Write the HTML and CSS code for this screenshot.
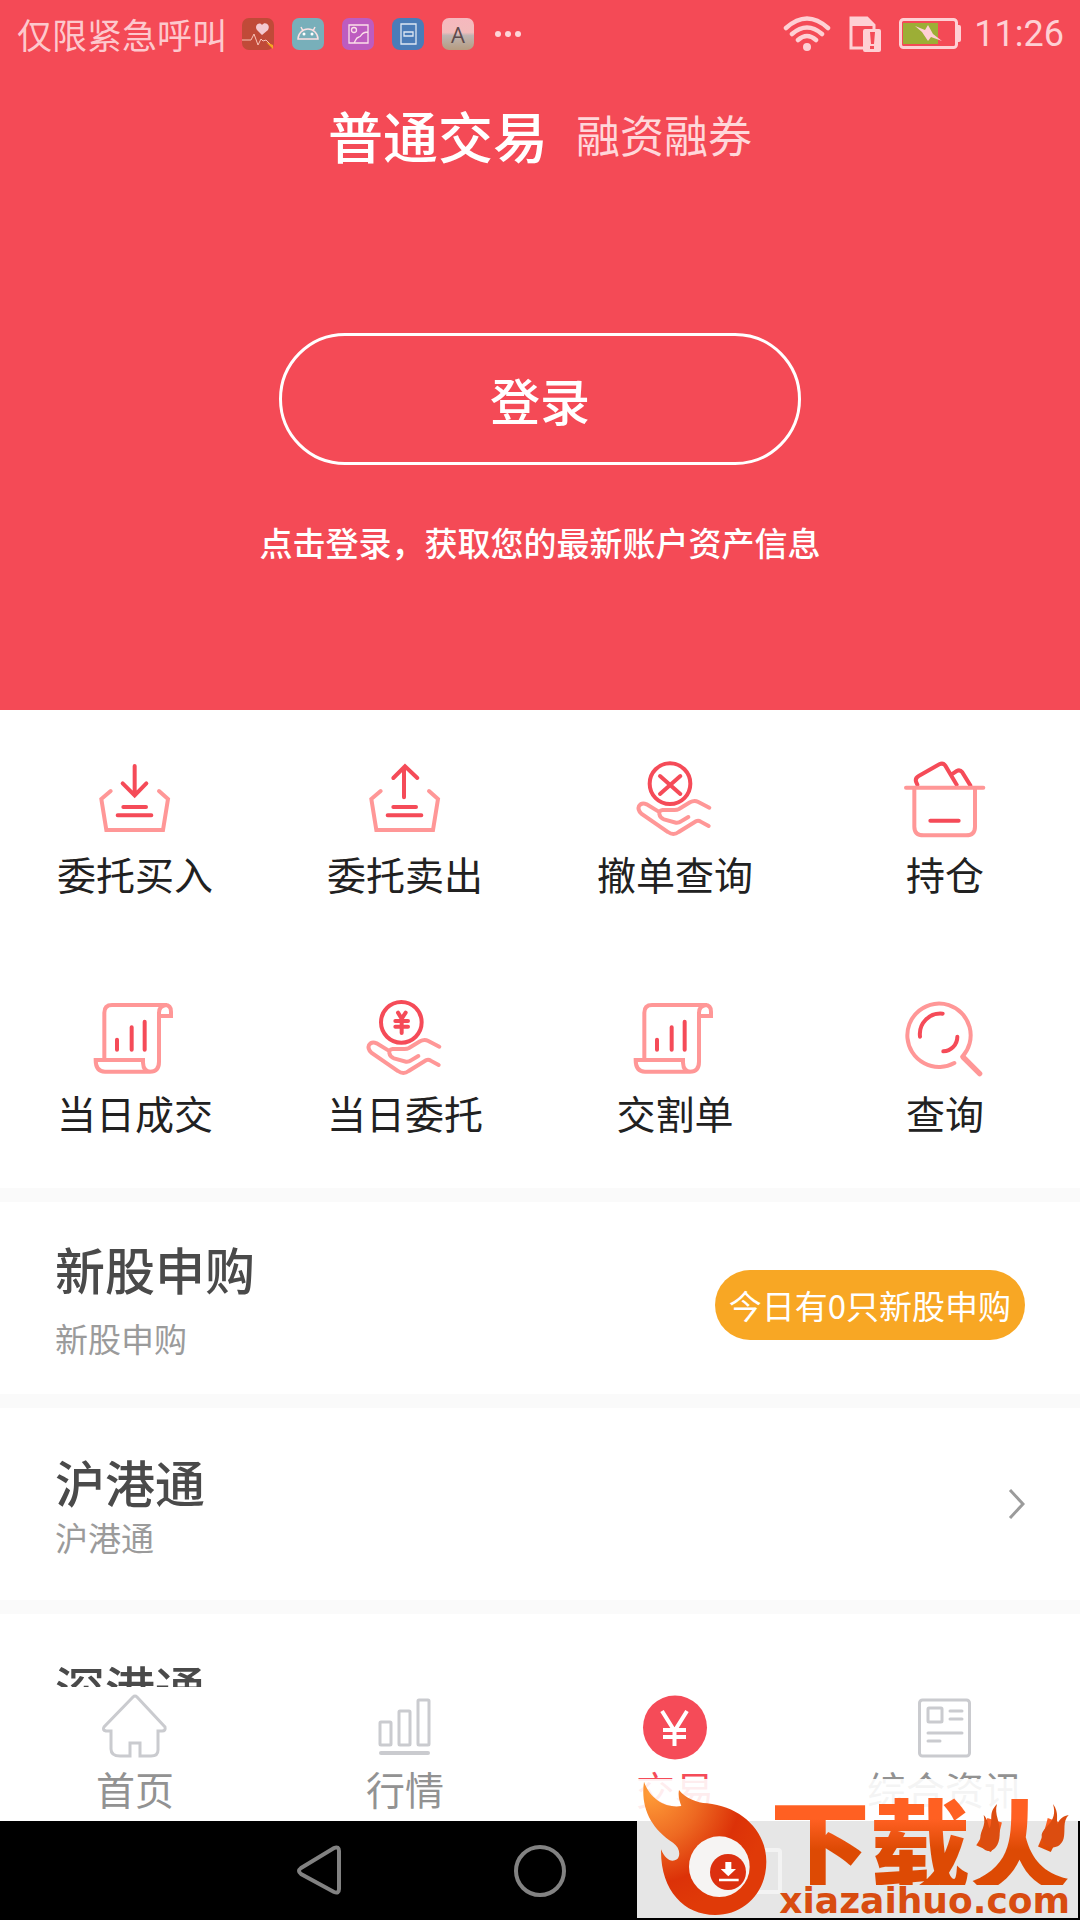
FILE: index.html
```html
<!DOCTYPE html>
<html lang="zh-CN">
<head>
<meta charset="utf-8">
<meta name="viewport" content="width=device-width, initial-scale=1">
<title>普通交易</title>
<link rel="stylesheet" href="styles.css">
</head>
<body>
<svg class="defs" aria-hidden="true">
  <symbol id="hand" viewBox="150 36 270 270">
    <path class="soft" d="M388 203L355 186Q343 180 330 187L297 207Q290 211 280 210L248 210Q236 212 238 222Q240 234 252 238L288 248Q296 249 303 244L325 231M236 215L200 193Q185 186 177 198Q172 209 184 221L264 276Q280 288 296 276L348 244Q355 240 362 245L386 258"/>
  </symbol>
  <symbol id="scroll" viewBox="90 33 270 270">
    <path class="soft" d="M133 238V98Q133 75 156 75H315Q333 75 333 95V108H299M318 75Q297 78 297 98V245Q297 275 270 275H135Q107 275 107 240H249V248Q250 275 272 275"/>
    <path class="strong" d="M171 179V209M215 142V209M254 125V209"/>
  </symbol>
</svg>
<div class="app">
  <main class="content">
    <header class="hero">
      <div class="status">
        <span class="carrier">仅限紧急呼叫</span>
        <div class="notices">
          <svg class="notice" viewBox="0 0 32 32"><rect width="32" height="32" rx="7" fill="#c04a38"/><path d="M20 17l-5-5c-3-4 2-9 5-5 3-4 9 0 6 5z" fill="#f3c9d0"/><path d="M0 22h9l3-6 4 11 3-6 2 2 3-1 4 4" fill="none" stroke="#f9c4b8"/><path d="M24 24l7 3v4z" fill="#f5a623"/></svg>
          <svg class="notice" viewBox="0 0 32 32"><rect width="32" height="32" rx="7" fill="#78afba"/><path d="M6 21a10 10 0 0 1 20 0zM9 9l2 4M23 9l-2 4" fill="none" stroke="#fbdfe2" stroke-width="1.5"/><circle cx="12" cy="16" r="1.5" fill="#fff"/><circle cx="20" cy="16" r="1.5" fill="#fff"/></svg>
          <svg class="notice" viewBox="0 0 32 32"><rect width="32" height="32" rx="7" fill="#bd5cc0"/><g fill="none" stroke="#fbdfe8" stroke-width="1.3"><path d="M7 7h19v18H7zM12 25c2-2 1-5 5-6 3-1 2-5 9-5"/><circle cx="12" cy="12" r="2.5"/></g></svg>
          <svg class="notice" viewBox="0 0 32 32"><rect width="32" height="32" rx="8" fill="#4a7cb8"/><path d="M9 6h15v20H9zM12 14h9v4h-9z" fill="none" stroke="#dde6f2" stroke-width="1.3"/></svg>
          <span class="notice letter">A</span>
          <svg class="dots" viewBox="0 0 28 32"><g fill="#fdd5d8"><circle cx="4" cy="16" r="3"/><circle cx="14" cy="16" r="3"/><circle cx="24" cy="16" r="3"/></g></svg>
        </div>
        <div class="system">
          <svg width="48" height="36" viewBox="0 0 48 36"><g fill="none" stroke="#fed0d4" stroke-width="4.5" stroke-linecap="round"><path d="M3 12Q24-7 45 12M9 18Q24 5 39 18M15 24Q24 16 33 24"/></g><circle cx="24" cy="31" r="4" fill="#fed0d4"/></svg>
          <svg width="32" height="36" viewBox="0 0 32 36"><path d="M2 32V2h16l7 7v5M2 2v30h13" fill="none" stroke="#fed0d4" stroke-width="3"/><path d="M1 1h17l8 9H1zM16 13h14q2 0 2 2v19q0 2-2 2H16q-2 0-2-2V15q0-2 2-2z" fill="#fed0d4"/><path d="M21 16h5l-1 12h-3zM21 30h4v3h-4z" fill="#f44a56"/></svg>
          <svg width="62" height="32" viewBox="0 0 62 32"><rect x="1.500" y="1.500" width="56" height="28" rx="3" fill="none" stroke="#fed0d4" stroke-width="3"/><path d="M58 7h2q2 0 2 2v13q0 2-2 2h-2z" fill="#fed0d4"/><path d="M4 5h35v21H4z" fill="#9cae36"/><path d="M16 8l10 4 3-5 5 9 9 7-11-4-3 4-6-9z" fill="#fed0d4"/></svg>
          <time class="clock">11:26</time>
        </div>
      </div>
      <nav class="modes">
        <a class="mode active" href="#normal">普通交易</a>
        <a class="mode" href="#margin">融资融券</a>
      </nav>
      <button class="login" type="button">登录</button>
      <p class="hint">点击登录，获取您的最新账户资产信息</p>
    </header>

    <nav class="grid">
      <a class="cell" href="#buy">
        <svg class="icon" viewBox="90 36 270 270"><path class="soft" d="M152 153L124 177L139 270H309L324 177L297 153"/><path class="strong" d="M224 78V165M188 130L224 166L259 130M190 201H258M173 226H274"/></svg>
        <span>委托买入</span>
      </a>
      <a class="cell" href="#sell">
        <svg class="icon" viewBox="90 36 270 270"><path class="soft" d="M152 153L124 177L139 270H309L324 177L297 153"/><path class="strong" d="M222 172V82M190 114L225 79L262 114M190 201H258M173 226H274"/></svg>
        <span>委托卖出</span>
      </a>
      <a class="cell" href="#cancel">
        <svg class="icon" viewBox="150 36 270 270"><use href="#hand" x="150" y="36" width="270" height="270"/><circle class="strong" cx="270" cy="131" r="61"/><path class="strong" d="M240 108L301 162M301 108L240 162"/></svg>
        <span>撤单查询</span>
      </a>
      <a class="cell" href="#holdings">
        <svg class="icon" viewBox="960 36 270 270"><path class="strong" d="M1012 134L1008 125Q1005 114 1016 108L1078 73Q1089 67 1096 77L1130 134M1115 103L1130 93Q1140 88 1147 97L1171 136M1051 242H1136"/><path class="soft" d="M978 143H1210M1003 143V260Q1003 286 1031 286H1158Q1185 286 1185 260V143"/></svg>
        <span>持仓</span>
      </a>
      <a class="cell" href="#deals">
        <svg class="icon" viewBox="0 0 270 270"><use href="#scroll" width="270" height="270"/></svg>
        <span>当日成交</span>
      </a>
      <a class="cell" href="#orders">
        <svg class="icon" viewBox="150 36 270 270"><use href="#hand" x="150" y="36" width="270" height="270"/><circle class="strong" cx="274" cy="130" r="61"/><path class="strong" d="M264 101L275 119L287 101M275 119V162M256 126H294M256 143H294"/></svg>
        <span>当日委托</span>
      </a>
      <a class="cell" href="#settlement">
        <svg class="icon" viewBox="0 0 270 270"><use href="#scroll" width="270" height="270"/></svg>
        <span>交割单</span>
      </a>
      <a class="cell" href="#query">
        <svg class="icon" viewBox="960 33 270 270"><path class="soft" d="M1123 249A95 95 0 1 1 1148 229"/><path class="soft thick" d="M1149 231L1199 281"/><path class="strong" d="M1020 170A62 62 0 0 1 1088 101M1132 170A44 44 0 0 1 1090 214"/></svg>
        <span>查询</span>
      </a>
    </nav>

    <section class="row ipo">
      <div class="text">
        <h2>新股申购</h2>
        <p>新股申购</p>
      </div>
      <a class="pill" href="#ipo">今日有0只新股申购</a>
    </section>
    <section class="row">
      <div class="text">
        <h2>沪港通</h2>
        <p>沪港通</p>
      </div>
      <svg class="chevron" viewBox="0 0 17 30"><path d="M2 1L15 15L2 29" fill="none" stroke="#9b9b9b" stroke-width="3"/></svg>
    </section>
    <section class="row">
      <div class="text">
        <h2>深港通</h2>
      </div>
    </section>
  </main>

  <nav class="tabs">
    <a class="tab" href="#home">
      <svg class="tab-icon" viewBox="0 0 70 70"><path d="M33 5Q35 3 37 5L65 35Q66 39 62 39H58V58Q58 64 51 64H40V51H30V64H20Q11 64 11 57V39H6Q2 38 4 35Z"/></svg>
      <span>首页</span>
    </a>
    <a class="tab" href="#quotes">
      <svg class="tab-icon" viewBox="0 0 70 70"><rect x="10" y="30" width="11" height="23" rx="1"/><rect x="29" y="19" width="11" height="34" rx="1"/><rect x="48" y="8" width="11" height="45" rx="1"/><path stroke-width="4" d="M11 61H58"/></svg>
      <span>行情</span>
    </a>
    <a class="tab active" href="#trade">
      <svg class="tab-icon" viewBox="0 0 70 70"><circle class="coin" cx="35" cy="35.500" r="32"/><path class="yen" d="M22 19L34.500 39V54M47 19L34.500 39M23 38H46M23 45H46"/></svg>
      <span>交易</span>
    </a>
    <a class="tab" href="#news">
      <svg class="tab-icon" viewBox="0 0 70 70"><rect x="9.500" y="8" width="50" height="56" rx="3"/><rect x="18" y="16" width="14" height="14" rx="1"/><path d="M40 19H52M40 27H52M18 41H52M18 49H30"/></svg>
      <span>综合资讯</span>
    </a>
  </nav>

  <footer class="softkeys">
    <button type="button" aria-label="返回"><svg viewBox="0 0 60 60"><path d="M11 28L44 8Q49 6 49 11V49Q49 54 44 52L11 34Q7 31 11 28Z"/></svg></button>
    <button type="button" aria-label="主屏幕"><svg viewBox="0 0 60 60"><circle cx="30" cy="31" r="24"/></svg></button>
    <button type="button" aria-label="最近任务"><svg viewBox="0 0 60 60"><rect x="8" y="10" width="42" height="42" rx="2"/></svg></button>
  </footer>

  <aside class="brand">
    <svg class="brand-art" viewBox="110 357 1323 417">
      <defs>
        <radialGradient id="fire" gradientUnits="userSpaceOnUse" cx="150" cy="400" r="360">
          <stop offset="0" stop-color="#ff9c38"/><stop offset=".4" stop-color="#ee6a22"/><stop offset=".75" stop-color="#dc3208"/><stop offset="1" stop-color="#e03a08"/>
        </radialGradient>
      </defs>
      <path fill="url(#fire)" d="M131 365C150 420 200 445 243 438C236 420 233 405 236 390C255 415 290 428 320 430C420 440 498 510 498 605C498 700 430 765 345 765C250 765 180 690 182 568C195 600 214 608 230 598C242 585 238 562 218 548C150 505 120 440 131 365Z"/>
      <circle cx="357" cy="620" r="91" fill="#f6f4f3"/>
      <circle cx="383" cy="636" r="54" fill="#dc3010"/>
      <path d="M375 606H393V627H407L384 649L361 627H375ZM356 656H415V664H356Z" fill="#fff"/>
      <g fill="#dc4d10">
        <path d="M1190 432C1180 465 1202 485 1198 525C1196 585 1140 590 1140 535C1140 510 1158 500 1150 465C1164 480 1162 495 1168 505C1180 480 1162 460 1190 432Z"/>
        <path d="M1358 432C1378 460 1366 478 1372 492C1378 475 1390 468 1405 465C1386 485 1396 510 1390 535C1380 575 1325 570 1324 528C1324 500 1375 490 1358 432Z"/>
      </g>
    </svg>
    <div class="brand-text">
      <strong class="brand-name">下载火</strong>
      <span class="brand-url">xiazaihuo.com</span>
    </div>
  </aside>
</div>
</body>
</html>
```
FILE: styles.css
```css
* {
  box-sizing: border-box;
}

body {
  margin: 0;
  background: #fff;
  font-family: "Noto Sans CJK SC", "Noto Sans", sans-serif;
}

h2,
p {
  margin: 0;
  font-weight: 400;
}

a {
  color: inherit;
  text-decoration: none;
}

svg {
  display: block;
  flex: none;
}

.defs {
  position: absolute;
  width: 0;
  height: 0;
}

.app {
  position: relative;
  display: flex;
  flex-direction: column;
  height: 100vh;
}

.content {
  flex: 1;
  min-height: 0;
  overflow: hidden;
}

/* Header */
.hero {
  display: flex;
  flex-direction: column;
  align-items: center;
  padding-bottom: 148px;
  background: #f44a56;
  color: #fff;
}

.status {
  display: flex;
  align-items: center;
  align-self: stretch;
  height: 68px;
  padding: 0 16px 0 17px;
  color: #fdc8cd;
}

.carrier {
  font-size: 35px;
  line-height: 40px;
}

.notices {
  display: flex;
  gap: 18px;
  margin-left: 15px;
}

.notice {
  width: 32px;
  height: 32px;
}

.letter {
  border-radius: 7px;
  background: linear-gradient(#f6b8be, #f2bcbc 45%, #bfb4b2 55%, #b59c80);
  color: #5d4a4c;
  font: 22px/32px "Open Sans", sans-serif;
  text-align: center;
}

.dots {
  width: 28px;
  height: 32px;
  margin-left: 2px;
}

.system {
  display: flex;
  align-items: center;
  gap: 18px;
  margin-left: auto;
}

.clock {
  margin-left: -5px;
  color: #fed0d4;
  font: 36px/40px Roboto, sans-serif;
}

.modes {
  display: flex;
  align-items: center;
  gap: 28px;
  margin-top: 34px;
}

.mode {
  color: #ffd7da;
  font-size: 44px;
  line-height: 64px;
}

.mode.active {
  color: #fff;
  font-size: 55px;
  font-weight: 500;
}

.login {
  width: 522px;
  height: 132px;
  margin-top: 167px;
  padding: 0;
  border: 3px solid #fff;
  border-radius: 66px;
  background: none;
  color: #fff;
  font: 500 50px/60px "Noto Sans CJK SC", sans-serif;
}

.hint {
  margin-top: 57px;
  font-size: 33px;
  font-weight: 500;
  line-height: 40px;
}

/* Shortcuts */
.grid {
  display: grid;
  grid-template-columns: repeat(4, 1fr);
  border-bottom: 14px solid #fafafa;
}

.cell {
  display: flex;
  flex-direction: column;
  align-items: center;
  gap: 8px;
  padding: 42px 0 53px;
  color: #212121;
  font-size: 39px;
  line-height: 46px;
}

.icon {
  width: 90px;
  height: 90px;
}

.soft,
.strong {
  fill: none;
  stroke: #ff9797;
  stroke-width: 12px;
  stroke-linecap: round;
}

.strong {
  stroke: #f54b58;
}

.thick {
  stroke-width: 16px;
}

/* Service rows */
.row {
  display: flex;
  align-items: center;
  justify-content: space-between;
  min-height: 206px;
  padding: 0 55px;
  border-bottom: 14px solid #fafafa;
}

.text {
  display: flex;
  flex-direction: column;
  gap: 6px;
  min-height: 106px;
}

.ipo .text {
  gap: 20px;
}

.row h2 {
  color: #4a4a4a;
  font-size: 50px;
  font-weight: 500;
  line-height: 60px;
}

.row p {
  color: #9b9b9b;
  font-size: 33px;
  line-height: 40px;
}

.pill {
  margin-top: 14px;
  padding: 14px;
  border-radius: 35px;
  background: #f8a724;
  color: #fff;
  font-size: 33px;
  line-height: 42px;
}

.chevron {
  width: 17px;
  height: 30px;
}

/* Tab bar */
.tabs {
  display: grid;
  grid-template-columns: repeat(4, 1fr);
  background: #fff;
}

.tab {
  display: flex;
  flex-direction: column;
  align-items: center;
  gap: 3px;
  padding: 5px 0 10px;
  color: #929292;
  font-size: 39px;
  line-height: 46px;
}

.tab.active {
  color: #f54b58;
}

.tab-icon {
  width: 70px;
  height: 70px;
  fill: none;
  stroke: #cacbcf;
  stroke-width: 3px;
  stroke-linecap: round;
}

.coin {
  fill: #f54b58;
  stroke: none;
}

.yen {
  stroke: #fff;
  stroke-width: 4px;
  stroke-linecap: butt;
}

/* System keys */
.softkeys {
  display: flex;
  justify-content: center;
  gap: 160px;
  padding: 19px 0 20px;
  background: #000;
}

.softkeys button {
  padding: 0;
  border: 0;
  background: none;
}

.softkeys svg {
  width: 60px;
  height: 60px;
  fill: none;
  stroke: #828282;
  stroke-width: 4px;
}

/* Brand badge over the lower corner */
.brand {
  position: absolute;
  right: 2px;
  bottom: 2px;
  width: 441px;
  height: 139px;
  background: rgba(255, 255, 255, 0.9);
}

.brand-art {
  position: absolute;
  inset: 0;
  width: 441px;
  height: 139px;
}

.brand-text {
  display: flex;
  flex-direction: column;
  align-items: flex-end;
  padding: 18px 8px 0 0;
}

.brand-name {
  background: linear-gradient(#ff6022 25%, #dd4a04 60%);
  background-clip: text;
  color: transparent;
  font-size: 100px;
  font-weight: 900;
  line-height: 88px;
}

.brand-url {
  color: #d84c10;
  font: bold 36px/32px "DejaVu Sans", sans-serif;
}
```
